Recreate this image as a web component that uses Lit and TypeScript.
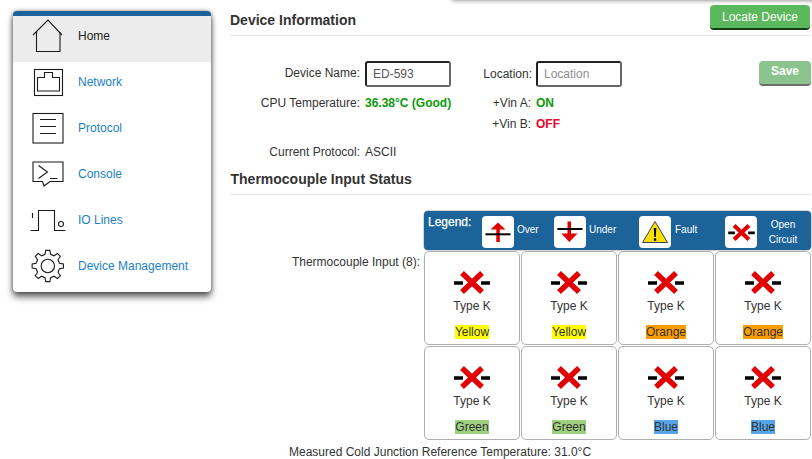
import { LitElement, html, css, svg } from "lit";
import { customElement } from "lit/decorators.js";

const gearPath = (cx: number, cy: number, rOut: number, rIn: number, teeth: number) => {
  const pts: string[] = [];
  const step = (Math.PI * 2) / teeth;
  for (let i = 0; i < teeth; i++) {
    const a = -Math.PI / 2 + i * step;
    const p = (r: number, d: number) => `${(cx + r * Math.cos(a + d * step)).toFixed(2)} ${(cy + r * Math.sin(a + d * step)).toFixed(2)}`;
    pts.push(p(rIn, -0.3), p(rOut, -0.17), p(rOut, 0.17), p(rIn, 0.3));
  }
  return "M" + pts.join(" L") + " Z";
};

const navIcons = {
  home: svg`<path d="M3 19 L18 4 L32 19" /><path d="M6.500 16 V35.500 H30 V16" />`,
  network: svg`<rect x="4.500" y="7.500" width="28" height="26" /><path d="M7.500 29 V15.500 H14.500 V10.500 H22.500 V15.500 H29.500 V29 Z" />`,
  protocol: svg`<rect x="3" y="5.500" width="30" height="29.500" /><path d="M10 11.500 H26 M10 18.500 H26 M10 25.500 H26" />`,
  console: svg`<path d="M3 8 H33 V27.500 H20 L14 32 L12.500 27.500 H3 Z" /><path d="M8.500 11.500 L17.500 18 L8.500 24.500 M20 24.500 H27.500" />`,
  io: svg`<path d="M0.500 30.500 H8.500 V10.500 H24.500 V30.500 H35.500" /><path d="M2.500 13 V18" /><circle cx="31" cy="24" r="2.500" />`,
  gear: svg`<circle cx="17.800" cy="20" r="6.700" /><path d="${gearPath(17.8, 20, 15.8, 12, 8)}" />`,
};

const openIcon = (w: number, h: number) => html`<svg width=${w} height=${h} viewBox="0 0 36 23" aria-hidden="true">
  <path d="M0 12 H9 M27 12 H36" stroke="#000" stroke-width="3.500" fill="none" />
  <path d="M8 2 L28 21 M28 2 L8 21" stroke="#e00000" stroke-width="5.500" fill="none" />
</svg>`;

const overIcon = html`<svg width="32" height="32" viewBox="0 0 32 32" aria-hidden="true">
  <path d="M16 6.500 L23.500 13.500 H17.800 V26 H14.300 V13.500 H8.500 Z" fill="#e00000" />
  <path d="M3.500 18.300 H28.500" stroke="#000" stroke-width="2" />
</svg>`;
const underIcon = html`<svg width="32" height="32" viewBox="0 0 32 32" aria-hidden="true">
  <path d="M13.500 5.500 H17 V17.500 H23.500 L15.300 26 L7.300 17.500 H13.500 Z" fill="#e00000" />
  <path d="M3.300 13 H28.500" stroke="#000" stroke-width="2" />
</svg>`;
const faultIcon = html`<svg width="32" height="32" viewBox="0 0 32 32" aria-hidden="true">
  <path d="M16 5.500 L28.500 26.500 H3.500 Z" fill="#fbe100" stroke="#33415c" stroke-width="1" stroke-linejoin="round" />
  <path d="M14.800 12 H17.300 L16.800 21 H15.300 Z" fill="#000" /><rect x="14.900" y="22.300" width="2.300" height="2.500" fill="#000" />
</svg>`;

@customElement("app-root")
export class AppRoot extends LitElement {
  static styles = css`
    :host { display: block; width: 812px; height: 459px; overflow: hidden; position: relative; background: #fff;
      font-family: "Liberation Sans", Arial, sans-serif; font-size: 12px; color: #333; }
    .topshade { position: absolute; left: 452px; right: -20px; top: -12px; height: 12px; box-shadow: 0 0 5px rgba(0,0,0,.55); }
    .page { display: flex; align-items: flex-start; }
    .side { width: 198px; margin: 11px 19px 0 13px; flex: none; background: #fff; border-top: 5px solid #1b6399;
      border-radius: 4px; box-shadow: 0 0 4px rgba(0,0,0,.45), 0 5px 7px rgba(0,0,0,.6); }
    .nav { display: flex; align-items: center; height: 46px; color: #1a7fc4; }
    .nav.on { background: #ececec; color: #222; }
    .nav span { padding-bottom: 7px; }
    .ico { width: 36px; height: 46px; margin: 0 12px 0 17px; flex: none; fill: none; stroke: #1b1b1b; stroke-width: 1.100; }
    .main { flex: 1; min-width: 0; padding-right: 1px; }
    h2 { margin: 0; font-size: 14px; font-weight: bold; color: #333; }
    .head { display: flex; align-items: flex-start; justify-content: space-between; border-bottom: 1px solid #e4e4e4; padding-top: 5px; box-sizing: border-box; height: 36px; }
    .head h2 { padding-top: 7px; }
    .btn { border: 0; border-bottom: 2px solid #143d14; border-radius: 4px; background: #5cb85c; color: #fff; font: inherit; font-size: 12px; height: 25px; padding: 0; display: flex; align-items: center; justify-content: center; }
    .locate { width: 100px; margin-right: 1px; }
    .save { width: 52px; background: #8cc48d; border-bottom-color: #6d6d6d; font-weight: bold; padding-bottom: 3px; }
    .form { display: grid; grid-template-columns: 129px 107px 52px 1fr; column-gap: 6px; margin-top: 25px; align-items: center; }
    .l { text-align: right; white-space: nowrap; margin-right: -1px; }
    .l.loc { margin-right: -2px; line-height: 26px; }
    .r1 { height: 26px; }
    .n { line-height: 24px; }
    .field { width: 86px; height: 26px; box-sizing: border-box; border-radius: 3px; border: 2px solid; border-color: #222 #666 #666 #222; padding: 0 6px; font: inherit; color: #555; background: #fff; display: flex; align-items: center; }
    .field::placeholder { color: #8e8e8e; opacity: 1; }
    .row1end { display: flex; justify-content: space-between; align-items: flex-start; }
    .good { color: #0a9a0a; font-weight: bold; white-space: nowrap; }
    .bad { color: #f0002a; font-weight: bold; }
    .r2 { height: 21px; }
    .first { margin-top: 9px; }
    .proto { margin-top: 7px; line-height: 14px; }
    .sec { height: 36px; border-bottom: 1px solid #e4e4e4; box-sizing: border-box; padding: 12px 0 0 .5px; }
    .input { display: grid; grid-template-columns: 194px 1fr; margin-top: 16px; }
    .ilabel { grid-row: 2; text-align: right; padding-right: 4px; padding-top: 5px; white-space: nowrap; }
    .legend { grid-column: 2; height: 39px; box-sizing: border-box; background: #1b6399; border-radius: 4px; color: #fff; font-size: 10px; display: grid; grid-template-columns: 54px 72px 85px 86px 1fr; padding: 5px 0 0 4px; box-shadow: 0 0 0 .5px #aaa; }
    .legend b { font-size: 12px; font-weight: normal; line-height: 13px; -webkit-text-stroke: .25px #fff; }
    .li { display: flex; align-items: center; gap: 3px; height: 32px; }
    .li span.t { padding-bottom: 5px; }
    .li span.f { margin-left: 1px; }
    .lg { width: 32px; height: 32px; background: #fff; border-radius: 4px; display: flex; align-items: center; justify-content: center; flex: none; }
    .open { width: 44px; text-align: center; line-height: 15px; margin-left: 1px; }
    .cells { grid-column: 2; grid-row: 2; display: grid; grid-template-columns: repeat(4, 96px); grid-auto-rows: 94px; gap: 1px; margin-top: 1px; }
    .cell { border: 1px solid #b0b0b0; border-radius: 5px; display: flex; flex-direction: column; align-items: center; box-sizing: border-box; padding-top: 19px; }
    .cell svg { flex: none; }
    .type { margin-top: 5px; line-height: 14px; }
    .tag { margin-top: 12px; line-height: 14px; }
    .yellow { background: #ffff00; } .orange { background: #ff9d00; } .green { background: #9ed07f; } .blue { background: #56a5e8; }
    .cold { margin: 5px 0 0 59px; line-height: 14px; }
  `;

  render() {
    const nav: [keyof typeof navIcons, string][] = [["home", "Home"], ["network", "Network"], ["protocol", "Protocol"], ["console", "Console"], ["io", "IO Lines"], ["gear", "Device Management"]];
    const tags: [string, string][] = [["Yellow", "yellow"], ["Yellow", "yellow"], ["Orange", "orange"], ["Orange", "orange"], ["Green", "green"], ["Green", "green"], ["Blue", "blue"], ["Blue", "blue"]];
    return html`
      <div class="topshade"></div>
      <div class="page">
        <nav class="side">
          ${nav.map(([k, t], i) => html`<div class="nav ${i === 0 ? "on" : ""}"><svg class="ico" viewBox="0 0 36 46">${navIcons[k]}</svg><span>${t}</span></div>`)}
        </nav>
        <main class="main">
          <div class="head"><h2>Device Information</h2><button class="btn locate">Locate Device</button></div>
          <div class="form">
            <div class="l r1 n">Device Name:</div>
            <div class="r1"><input class="field" value="ED-593" /></div>
            <div class="l r1 loc">Location:</div>
            <div class="row1end"><input class="field" placeholder="Location" /><button class="btn save">Save</button></div>

            <div class="l r2 first">CPU Temperature:</div><div class="good r2 first">36.38°C (Good)</div>
            <div class="l r2 first">+Vin A:</div><div class="good r2 first">ON</div>

            <div></div><div></div>
            <div class="l r2">+Vin B:</div><div class="bad r2">OFF</div>

            <div class="l proto">Current Protocol:</div><div class="proto">ASCII</div><div></div><div></div>
          </div>
          <div class="sec"><h2>Thermocouple Input Status</h2></div>
          <div class="input">
            <div class="legend">
              <b>Legend:</b>
              <div class="li"><span class="lg">${overIcon}</span><span class="t">Over</span></div>
              <div class="li"><span class="lg">${underIcon}</span><span class="t">Under</span></div>
              <div class="li"><span class="lg">${faultIcon}</span><span class="t f">Fault</span></div>
              <div class="li"><span class="lg">${openIcon(27, 17)}</span><span class="open">Open<br />Circuit</span></div>
            </div>
            <div class="ilabel">Thermocouple Input (8):</div>
            <div class="cells">
              ${tags.map(([t, c]) => html`<div class="cell">${openIcon(36, 23)}<div class="type">Type K</div><div class="tag ${c}">${t}</div></div>`)}
            </div>
          </div>
          <div class="cold">Measured Cold Junction Reference Temperature: 31.0°C</div>
        </main>
      </div>
    `;
  }
}
